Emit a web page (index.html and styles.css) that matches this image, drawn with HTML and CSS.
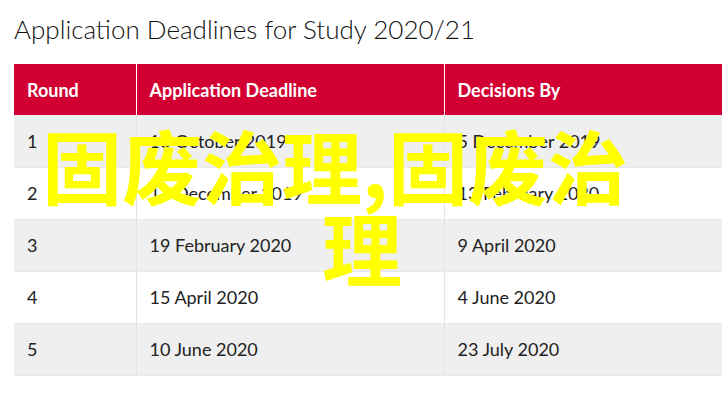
FILE: index.html
```html
<!DOCTYPE html>
<html lang="en">
<head>
<meta charset="utf-8">
<link rel="stylesheet" href="styles.css">
</head>
<body>
<div class="page">
  <h1 class="title">Application Deadlines for Study 2020/21</h1>
  <table class="deadlines">
    <thead>
      <tr><th class="c1">Round</th><th class="c2">Application Deadline</th><th class="c3">Decisions By</th></tr>
    </thead>
    <tbody>
      <tr><td>1</td><td>16 October 2019</td><td>5 December 2019</td></tr>
      <tr><td>2</td><td>11 December 2019</td><td>13 February 2020</td></tr>
      <tr><td>3</td><td>19 February 2020</td><td>9 April 2020</td></tr>
      <tr><td>4</td><td>15 April 2020</td><td>4 June 2020</td></tr>
      <tr><td>5</td><td>10 June 2020</td><td>23 July 2020</td></tr>
    </tbody>
  </table>
  <div class="watermark">固废治理,固废治理</div>
</div>
</body>
</html>
```

FILE: styles.css
```css
html, body {
  margin: 0;
  padding: 0;
  background: #ffffff;
}
.page {
  position: relative;
  width: 728px;
  height: 408px;
  padding: 0 6px 0 14px;
  box-sizing: border-box;
  font-family: Lato, "Liberation Sans", sans-serif;
}
.title {
  margin: 0;
  padding-top: 12px;
  height: 64px;
  box-sizing: border-box;
  font-family: Lato, "Liberation Sans", sans-serif;
  font-weight: 300;
  font-size: 26px;
  line-height: 34px;
  color: #111;
  letter-spacing: 0;
}
.deadlines {
  width: 708px;
  border-collapse: collapse;
  table-layout: fixed;
}
.deadlines th {
  background: #d20032;
  color: #fff;
  font-weight: 700;
  font-size: 18px;
  text-align: left;
  height: 51px;
  padding: 0 11px 0 13px;
  border-left: 1px solid #fff;
  box-sizing: border-box;
}
.deadlines th:first-child { border-left: none; }
.c1 { width: 122px; }
.c2 { width: 308px; }
.c3 { width: 278px; }
.deadlines td {
  height: 52px;
  padding: 0 11px 0 13px;
  font-size: 18px;
  color: #222;
  border-left: 1px solid #e4e4e4;
  border-bottom: 1px solid #e8e8e8;
  box-sizing: border-box;
}
.deadlines td:first-child { border-left: none; }
.deadlines tbody tr:nth-child(odd) td { background: #efefef; }
.deadlines tbody tr:nth-child(even) td { background: #ffffff; }
.watermark {
  position: absolute;
  left: 72px;
  top: 122px;
  width: 580px;
  text-align: center;
  text-indent: -54px;
  font-family: "Noto Sans CJK SC", sans-serif;
  font-weight: 700;
  font-size: 80px;
  line-height: 82px;
  color: #ffff00;
}
```
